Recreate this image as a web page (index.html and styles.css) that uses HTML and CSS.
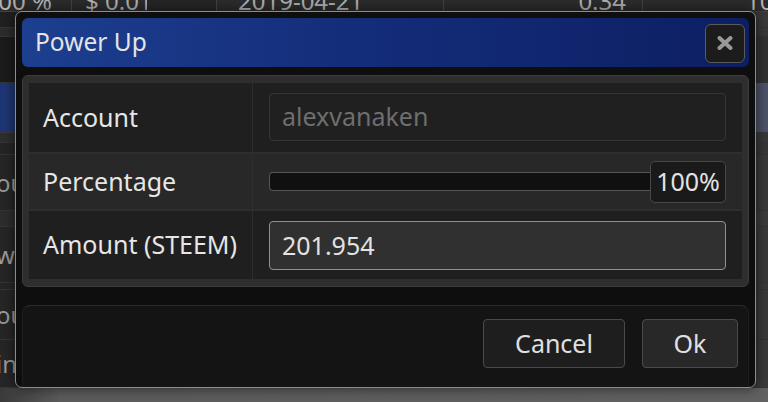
FILE: index.html
```html
<!DOCTYPE html>
<html>
<head>
<meta charset="utf-8">
<link rel="stylesheet" href="styles.css">
</head>
<body>
<div class="page">
  <div class="bg">
    <div class="bg-row hdr">
      <span class="hc hc1">00 %</span>
      <span class="hc hc2">$ 0.01</span>
      <span class="hc hc3"></span>
      <span class="hc hc4">2019-04-21</span>
      <span class="hc hc5">0.34</span>
      <span class="hc hc6">10</span>
    </div>
    <div class="bg-row r2"></div>
    <div class="bg-row r3"></div>
    <div class="bg-row r4"></div>
    <div class="bg-row sel"></div>
    <div class="bg-row r6"></div>
    <div class="bg-row r7"></div>
    <div class="bg-row r8"><span class="bt">ou</span></div>
    <div class="bg-row r9"></div>
    <div class="bg-row r10"><span class="bt">wa</span></div>
    <div class="bg-row r11"></div>
    <div class="bg-row r12"><span class="bt">ou</span></div>
    <div class="bg-row r13"><span class="bt">in</span></div>
    <div class="bg-row r14"></div>
  </div>

  <div class="dialog">
    <div class="titlebar">
      <span class="title">Power Up</span>
      <button class="close" aria-label="Close">
        <svg width="16" height="14" viewBox="0 0 16 14"><path d="M2.5 2 L13.5 12 M13.5 2 L2.5 12" stroke="#999" stroke-width="4" stroke-linecap="round" fill="none"/></svg>
      </button>
    </div>
    <div class="panel">
      <div class="form">
        <div class="frow odd r-account">
          <div class="lbl">Account</div>
          <div class="val"><div class="input disabled">alexvanaken</div></div>
        </div>
        <div class="frow even r-pct">
          <div class="lbl">Percentage</div>
          <div class="val">
            <div class="slider"><div class="track"></div><div class="pct">100%</div></div>
          </div>
        </div>
        <div class="frow odd r-amount">
          <div class="lbl">Amount (STEEM)</div>
          <div class="val"><div class="input active">201.954</div></div>
        </div>
      </div>
    </div>
    <div class="footer">
      <button class="btn cancel">Cancel</button>
      <button class="btn ok">Ok</button>
    </div>
  </div>
</div>
</body>
</html>
```

FILE: styles.css
```css
* { box-sizing: border-box; }
html, body { margin: 0; padding: 0; }
body {
  width: 768px;
  height: 402px;
  overflow: hidden;
  background: #2a2a2a;
  font-family: "Noto Sans", "Open Sans", sans-serif;
}
.page {
  position: relative;
  width: 768px;
  height: 402px;
}

/* background table behind the modal */
.bg {
  display: flex;
  flex-direction: column;
  width: 768px;
  height: 402px;
}
.bg-row {
  display: flex;
  align-items: center;
  overflow: hidden;
  flex: none;
  border-bottom: 1px solid #353535;
  background: linear-gradient(to right, #262626, #3a3a3a);
}
.hdr {
  height: 12px;
  align-items: flex-start;
  background: #2c2c2c;
  border-bottom: 1px solid #444;
}
.hc {
  display: block;
  flex: none;
  margin-top: -12px;
  height: 26px;
  line-height: 26px;
  font-size: 24px;
  color: #b3b3b3;
  white-space: nowrap;
  border-right: 1px solid #454545;
}
.hc1 { width: 84px; margin-left: -12px; text-align: right; padding-right: 19px; }
.hc2 { width: 75px; padding-left: 13px; }
.hc3 { width: 70px; background: #262626; }
.hc4 { width: 227px; padding-left: 21px; }
.hc5 { width: 199px; text-align: right; padding-right: 16px; }
.hc6 { width: 125px; padding-left: 103px; border-right: 0; }

.r2 { height: 16px; background: linear-gradient(to right, #202020, #3a3a3a); }
.r3 { height: 9px; background: linear-gradient(to right, #2c2c2c, #3a3a3a); }
.r4 { height: 46px; background: linear-gradient(to right, #1b1b1b, #333); }
.sel { height: 50px; background: linear-gradient(to right, #1c3676, #22386c 30px, #4e5469); border-bottom-color: #3b3b3b; }
.r6 { height: 10px; background: linear-gradient(to right, #2e2e2e, #3a3a3a); }
.r7 { height: 12px; background: linear-gradient(to right, #252525, #383838); }
.r8 { height: 56px; }
.r9 { height: 16px; background: linear-gradient(to right, #2d2d2d, #3c3c3c); }
.r10 { height: 56px; }
.r11 { height: 7px; }
.r12 { height: 50px; }
.r13 { height: 48px; }
.r14 { height: 14px; border-bottom: 0; background: linear-gradient(to right, #3a3a3a, #5c5c5c 60px, #626262); }
.bt {
  margin-left: -4px;
  font-size: 24px;
  color: #9c9c9c;
}

/* modal */
.dialog {
  position: absolute;
  left: 15px;
  top: 11px;
  width: 741px;
  height: 377px;
  border: 1px solid #8c8c8c;
  border-radius: 7px;
  background: #0e0e0e;
  padding: 6px 6px 0 6px;
  display: flex;
  flex-direction: column;
  box-shadow: 0 0 14px rgba(0,0,0,0.6);
}
.titlebar {
  height: 49px;
  flex: none;
  border-radius: 6px;
  background: linear-gradient(to right, #1c3f8f, #142d7a 45%, #0d1f63);
  display: flex;
  align-items: center;
  justify-content: space-between;
  padding: 0 4px 0 13px;
}
.title {
  font-size: 24.5px;
  color: #e4e4e4;
  line-height: 1;
}
.close {
  width: 40px;
  height: 39px;
  margin-top: 1px;
  border: 1.5px solid #5a5a5a;
  border-radius: 6px;
  background: #1c1c1c;
  display: flex;
  align-items: center;
  justify-content: center;
  padding: 0;
}
.close svg { display: block; }

.panel {
  margin-top: 8px;
  height: 212px;
  flex: none;
  border: 1px solid #3c3c3c;
  border-radius: 6px;
  background: #2e2e2e;
  padding: 7px 6px;
}
.form {
  display: flex;
  flex-direction: column;
  gap: 2px;
  height: 100%;
}
.frow {
  display: grid;
  grid-template-columns: 223px 1fr;
  column-gap: 1px;
}
.r-account { height: 69px; }
.r-pct { height: 55px; }
.r-amount { height: 68px; }
.odd .lbl, .odd .val { background: #1f1f1f; }
.even .lbl, .even .val { background: #282828; }
.lbl {
  display: flex;
  align-items: center;
  padding-left: 14px;
  padding-bottom: 2px;
  font-size: 25px;
  color: #e6e6e6;
  white-space: nowrap;
}
.val {
  display: flex;
  align-items: center;
  padding: 0 16px;
}
.input {
  width: 100%;
  display: flex;
  align-items: center;
  border-radius: 4px;
  padding: 0 12px 2px;
  font-size: 25px;
}
.input.disabled {
  height: 48px;
  margin-top: -1px;
  border: 1px solid #363636;
  background: #202020;
  color: #6e6e6e;
}
.input.active {
  height: 49px;
  margin-top: 1px;
  border: 1px solid #909090;
  background: #303030;
  color: #e2e2e2;
}
.slider {
  width: 100%;
  display: flex;
  align-items: center;
}
.track {
  flex: 1;
  height: 19px;
  background: #101010;
  border: 1px solid #555;
  border-right: 0;
  border-radius: 4px 0 0 4px;
}
.pct {
  width: 76px;
  height: 42px;
  border: 1px solid #484848;
  border-radius: 5px;
  background: #1a1a1a;
  display: flex;
  align-items: center;
  justify-content: center;
  padding-bottom: 2px;
  font-size: 25px;
  color: #e2e2e2;
}

.footer {
  flex: 1;
  margin-top: 18px;
  border-top: 1px solid #2c2c2c;
  border-left: 1px solid #1e1e1e;
  border-right: 1px solid #1e1e1e;
  border-radius: 8px 8px 0 0;
  background: #141414;
  display: flex;
  justify-content: flex-end;
  align-items: flex-start;
  gap: 17px;
  padding: 13px 10px 0 0;
}
.btn {
  height: 49px;
  border: 1px solid #4a4a4a;
  border-radius: 4px;
  background: #1e1e1e;
  color: #e0e0e0;
  font-family: "Noto Sans", "Open Sans", sans-serif;
  font-size: 25px;
  padding: 0 0 2px;
  display: flex;
  align-items: center;
  justify-content: center;
}
.cancel { width: 142px; }
.ok { width: 96px; background: #282828; }
```
